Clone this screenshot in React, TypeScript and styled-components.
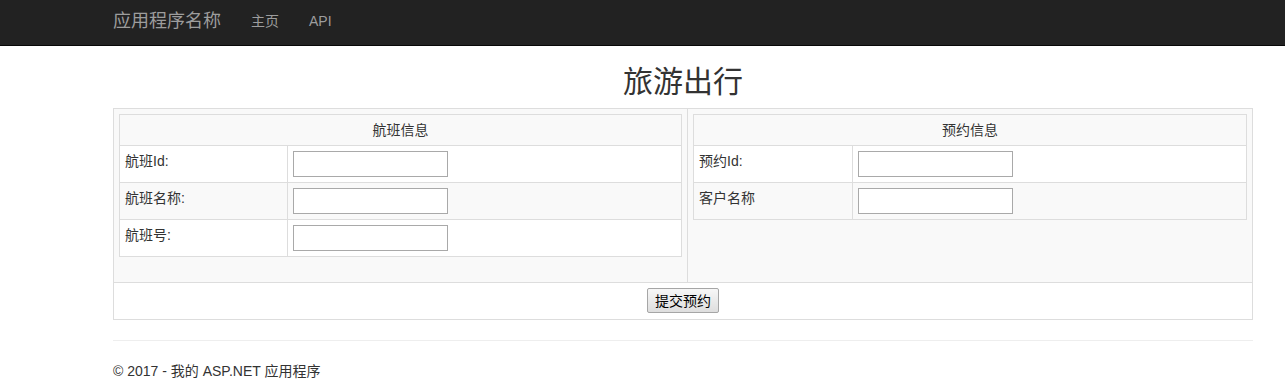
import React from "react";
import styled, {createGlobalStyle} from "styled-components";

const GlobalStyle = createGlobalStyle`
    * {
        box-sizing: border-box;
    }
    body {
        margin: 0;
        background: #fff;
        color: #333;
        font-family: "Liberation Sans", "Noto Sans CJK SC", sans-serif;
        font-size: 14px;
        line-height: 20px;
    }
`

const Navbar = styled.nav`
    height: 46px;
    background: #222;
    border-bottom: 1px solid #080808;
    display: flex;
    align-items: center;
    padding: 0 0 4px 113px;
`

const Brand = styled.a`
    font-size: 18px;
    line-height: 20px;
    color: #9d9d9d;
    text-decoration: none;
    padding-right: 15px;
`

const NavLink = styled.a`
    font-size: 14px;
    line-height: 20px;
    color: #9d9d9d;
    text-decoration: none;
    padding: 0 15px;
`

const Container = styled.div`
    width: 1285px;
    padding: 0 32px 0 113px;
`

const Title = styled.h2`
    margin: 19px 0 10px;
    font-size: 30px;
    font-weight: 400;
    line-height: 33px;
    text-align: center;
    color: #333;
`

const Table = styled.table<{ $width: number }>`
    width: ${p => p.$width}px;
    border-collapse: collapse;
    border-spacing: 0;
    table-layout: fixed;
`

const Row = styled.tr<{ $striped?: boolean }>`
    background: ${p => (p.$striped ? "#f9f9f9" : "#fff")};
`

const Cell = styled.td<{ $center?: boolean }>`
    border: 1px solid #ddd;
    padding: 5px;
    line-height: 20px;
    vertical-align: middle;
    text-align: ${p => (p.$center ? "center" : "left")};
`

const PanelCell = styled(Cell)`
    vertical-align: top;
    padding-bottom: 25px;
`

const ActionCell = styled(Cell)`
    text-align: center;
    padding: 5px 5px 6px;
`

const LabelCell = styled(Cell)`
    vertical-align: top;
`

const TextInput = styled.input`
    display: block;
    width: 155px;
    height: 26px;
    border: 1px solid #a9a9a9;
    padding: 1px 2px;
    font: inherit;
    background: #fff;
`

const SubmitButton = styled.button`
    display: block;
    margin: 0 auto;
    height: 25px;
    padding: 0 7px;
    font-family: "Liberation Sans", "Noto Sans CJK SC", sans-serif;
    font-size: 14px;
    line-height: 20px;
    color: #000;
    border: 1px solid #a6a6a6;
    border-radius: 2px;
    background: linear-gradient(#f7f7f7, #dedede);
`

const Footer = styled.footer`
    border-top: 1px solid #eee;
    margin-top: 20px;
    padding-top: 20px;
`

const FooterText = styled.p`
    margin: 0;
    line-height: 20px;
`

type Field = { label: string }

function InfoTable({title, fields, width, labelWidth}: { title: string, fields: Field[], width: number, labelWidth: number }) {
    return (
        <Table $width={width}>
            <colgroup>
                <col style={{width: labelWidth}}/>
                <col/>
            </colgroup>
            <tbody>
            <Row $striped>
                <Cell colSpan={2} $center>{title}</Cell>
            </Row>
            {fields.map((f, i) => (
                <Row key={f.label} $striped={i % 2 === 1}>
                    <LabelCell>{f.label}</LabelCell>
                    <Cell><TextInput type="text"/></Cell>
                </Row>
            ))}
            </tbody>
        </Table>
    )
}

export default function App() {
    return (
        <>
            <GlobalStyle/>
            <Navbar>
                <Brand href="#">应用程序名称</Brand>
                <NavLink href="#">主页</NavLink>
                <NavLink href="#">API</NavLink>
            </Navbar>
            <Container>
                <Title>旅游出行</Title>
                <Table $width={1140}>
                    <colgroup>
                        <col style={{width: 574}}/>
                        <col/>
                    </colgroup>
                    <tbody>
                    <Row $striped>
                        <PanelCell>
                            <InfoTable title="航班信息" width={563} labelWidth={168}
                                       fields={[{label: "航班Id:"}, {label: "航班名称:"}, {label: "航班号:"}]}/>
                        </PanelCell>
                        <PanelCell>
                            <InfoTable title="预约信息" width={554} labelWidth={159}
                                       fields={[{label: "预约Id:"}, {label: "客户名称"}]}/>
                        </PanelCell>
                    </Row>
                    <Row>
                        <ActionCell colSpan={2}>
                            <SubmitButton type="submit">提交预约</SubmitButton>
                        </ActionCell>
                    </Row>
                    </tbody>
                </Table>
                <Footer>
                    <FooterText>© 2017 - 我的 ASP.NET 应用程序</FooterText>
                </Footer>
            </Container>
        </>
    )
}
